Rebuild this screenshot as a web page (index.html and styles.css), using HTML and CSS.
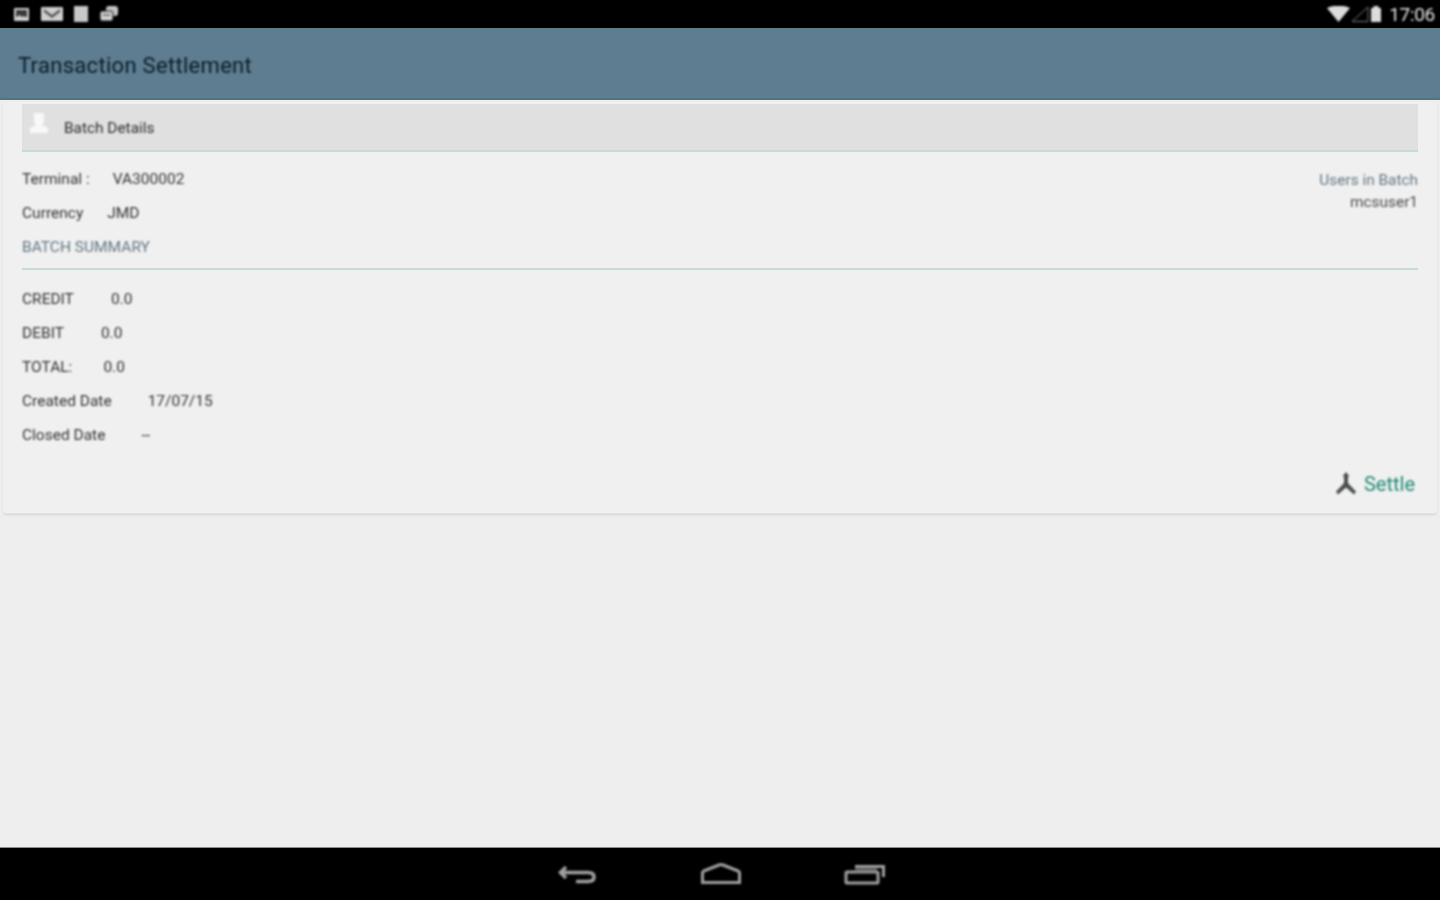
FILE: index.html
```html
<!DOCTYPE html>
<html lang="en">
<head>
<meta charset="utf-8">
<title>Transaction Settlement</title>
<link rel="stylesheet" href="styles.css">
</head>
<body>
<div class="screen">
  <div class="status">
    <div class="status-left soft">
      <svg class="ico" width="18" height="16" viewBox="0 0 18 16"><rect x="1" y="2" width="15" height="13" rx="1" fill="#cfcfcf"/><rect x="3" y="4" width="11" height="7" fill="#3a3a3a"/><path d="M3 12l3-3 3 2 2-1 3 3z" fill="#cfcfcf"/></svg>
      <svg class="ico" width="22" height="16" viewBox="0 0 22 16"><rect x="0" y="1" width="22" height="14" rx="1" fill="#cfcfcf"/><path d="M3 3l8 6 8-6v3l-8 6-8-6z" fill="#555"/></svg>
      <svg class="ico" width="16" height="16" viewBox="0 0 16 16"><rect x="1" y="0" width="14" height="16" fill="#c8c8c8"/></svg>
      <svg class="ico" width="20" height="18" viewBox="0 0 20 18"><rect x="7" y="1" width="12" height="10" rx="3" fill="#c4c4c4"/><rect x="1" y="6" width="13" height="10" rx="2" fill="#d0d0d0" stroke="#111"/><path d="M4 10h7" stroke="#666" stroke-width="1.5"/></svg>
    </div>
    <div class="status-right soft">
      <svg width="23" height="16" viewBox="0 0 23 16"><path d="M0 2Q11.500-3 23 2L11.500 16z" fill="#dcdcdc"/></svg>
      <svg width="18" height="16" viewBox="0 0 18 16"><path d="M1 15.500h16V1z" fill="none" stroke="#777"/></svg>
      <svg width="12" height="16" viewBox="0 0 12 16"><rect x="1" y="2" width="10" height="14" fill="#dcdcdc"/><rect x="3.500" y="0" width="5" height="2" fill="#dcdcdc"/></svg>
      <span class="clock">17:06</span>
    </div>
  </div>
  <header class="appbar"><h1 class="title soft">Transaction Settlement</h1></header>
  <main class="content">
    <section class="card">
      <div class="card-head">
        <svg class="user soft" width="22" height="26" viewBox="0 0 22 26"><path d="M6 3h10v9l-2 3 6 3v5H2v-5l6-3-2-3z" fill="#f8f8f8"/></svg>
        <span class="head-text soft">Batch Details</span>
      </div>
      <div class="top-info">
        <div>
          <div class="row row-first soft"><span class="label">Terminal :</span><span class="val v-term">VA300002</span></div>
          <div class="row soft"><span class="label">Currency</span><span class="val v-cur">JMD</span></div>
        </div>
        <div class="users soft"><div class="users-title">Users in Batch</div><div class="users-name">mcsuser1</div></div>
      </div>
      <div class="row summary soft">BATCH SUMMARY</div>
      <div class="rule"></div>
      <div class="row row-credit soft"><span class="label">CREDIT</span><span class="val v-credit">0.0</span></div>
      <div class="row soft"><span class="label">DEBIT</span><span class="val v-debit">0.0</span></div>
      <div class="row soft"><span class="label">TOTAL:</span><span class="val v-total">0.0</span></div>
      <div class="row soft"><span class="label">Created Date</span><span class="val v-created">17/07/15</span></div>
      <div class="row soft"><span class="label">Closed Date</span><span class="val v-closed">--</span></div>
      <div class="actions soft">
        <svg width="20" height="24" viewBox="0 0 20 24"><path d="M10 0l3.500 4.500H12V11l5 5.500 3 3-2 3L10 15.500 2 22.500l-2-3 3-3 5-5.500V4.500H6.500z" fill="#4a4f4d"/></svg>
        <span class="settle">Settle</span>
      </div>
    </section>
  </main>
  <nav class="navbar">
    <svg class="soft" width="40" height="26" viewBox="0 0 40 26"><path d="M8 6L2.500 11.500 8 17M3 11.500h27q6 0 6 4.500t-6 4.500H18" fill="none" stroke="#a0a0a0" stroke-width="3.500"/></svg>
    <svg class="soft" width="42" height="22" viewBox="0 0 42 22"><path d="M2.500 19.500V10Q2.500 8.500 5 7.500L19 2q2-.8 4 0l14 5.500Q39.500 8.500 39.500 10v9.500z" fill="none" stroke="#a0a0a0" stroke-width="3"/></svg>
    <svg class="soft" width="42" height="24" viewBox="0 0 42 24"><rect x="2" y="10" width="32" height="11" rx="1" fill="none" stroke="#a0a0a0" stroke-width="3"/><path d="M11 4.500h28.500V15" fill="none" stroke="#a0a0a0" stroke-width="3"/><path d="M11 8h22" stroke="#707070" stroke-width="3"/></svg>
  </nav>
</div>
</body>
</html>
```

FILE: styles.css
```css
* { box-sizing: border-box; }
html, body { margin: 0; padding: 0; }
body { width: 1440px; height: 900px; overflow: hidden; background: #eeeeee; font-family: Roboto, "Liberation Sans", sans-serif; }
.screen { display: flex; flex-direction: column; height: 900px; }
.soft { filter: blur(0.8px); }
.status { height: 28px; background: #000; display: flex; justify-content: space-between; align-items: center; padding: 0 5px 0 13px; }
.status-left { display: flex; align-items: center; gap: 10px; }
.status-right { display: flex; align-items: center; gap: 1px; }
.clock { color: #e4e4e4; font-size: 19px; margin-left: 6px; letter-spacing: -0.3px; }
.appbar { height: 72px; background: #5e7d90; display: flex; align-items: center; padding: 3px 18px 0; box-shadow: inset 0 -2px 0 #56727f; }
.title { margin: 0; font-size: 22px; font-weight: 400; color: #0a1c28; letter-spacing: 0.3px; }
.content { flex: 1; padding: 2px 3px 0; }
.card { height: 412px; background: #f0f0f0; border-bottom: 1px solid #e2e2e2; box-shadow: 0 1px 2px #d6d6d6; padding: 2px 19px 0; display: flex; flex-direction: column; border-radius: 0 0 3px 3px; }
.card-head { height: 48px; background: #e0e0e0; border-bottom: 2px solid #c5dcd2; display: flex; align-items: center; padding-left: 6px; flex: none; }
.user { margin-top: -9px; margin-right: 14px; }
.head-text { font-size: 15.400px; color: #2c2c2c; margin-top: 2px; }
.top-info { display: flex; justify-content: space-between; }
.row { height: 34px; display: flex; align-items: center; font-size: 15.500px; color: #333; flex: none; }
.row-first { margin-top: 10px; }
.label { color: #333; }
.val { color: #333; }
.v-term { margin-left: 23px; }
.v-cur { margin-left: 24px; }
.v-credit { margin-left: 37px; }
.v-debit { margin-left: 37px; }
.v-total { margin-left: 31px; }
.v-created { margin-left: 36px; }
.v-closed { margin-left: 36px; }
.users { text-align: right; margin-top: 17px; font-size: 15.400px; line-height: 22px; }
.users-title { color: #637784; }
.users-name { color: #4c4c4c; }
.summary { color: #637784; }
.rule { height: 2px; background: #c5dcd2; flex: none; margin-top: 4px; }
.row-credit { margin-top: 12px; }
.actions { display: flex; align-items: center; justify-content: flex-end; gap: 8px; margin-top: 20px; padding-right: 3px; }
.settle { font-size: 20px; color: #1f8a74; }
.navbar { height: 53px; background: #000; border-top: 1px solid #8c8c8c; display: flex; justify-content: center; align-items: center; gap: 102px; padding-left: 4px; }
```
